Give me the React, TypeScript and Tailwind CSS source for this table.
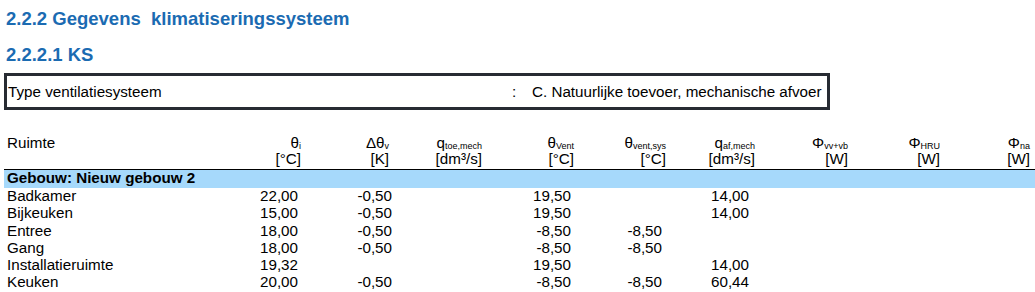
import React from "react";

type Row = { name: string; v: string[] };

const rows: Row[] = [
  { name: "Badkamer", v: ["22,00", "-0,50", "", "19,50", "", "14,00", "", "", ""] },
  { name: "Bijkeuken", v: ["15,00", "-0,50", "", "19,50", "", "14,00", "", "", ""] },
  { name: "Entree", v: ["18,00", "-0,50", "", "-8,50", "-8,50", "", "", "", ""] },
  { name: "Gang", v: ["18,00", "-0,50", "", "-8,50", "-8,50", "", "", "", ""] },
  { name: "Installatieruimte", v: ["19,32", "", "", "19,50", "", "14,00", "", "", ""] },
  { name: "Keuken", v: ["20,00", "-0,50", "", "-8,50", "-8,50", "60,44", "", "", ""] },
];

const dataPr = [
  "pr-[4px]",
  "pr-[1px]",
  "pr-[1px]",
  "pr-[4px]",
  "pr-[5px]",
  "pr-[7px]",
  "pr-[1px]",
  "pr-[1px]",
  "pr-[1px]",
];

const hdrPr = [
  "pr-[1px]",
  "pr-[4px]",
  "pr-[1px]",
  "pr-[1px]",
  "pr-[1px]",
  "pr-[1px]",
  "pr-[1px]",
  "pr-[1px]",
  "pr-[1px]",
];

const Sym = ({ main, sub }: { main: string; sub: string }) => (
  <span className="whitespace-nowrap">
    {main}
    <span className="relative top-[1px] text-[9px]">{sub}</span>
  </span>
);

const headers: { sym: React.ReactNode; unit: string }[] = [
  { sym: <Sym main="θ" sub="i" />, unit: "[°C]" },
  { sym: <Sym main="Δθ" sub="v" />, unit: "[K]" },
  { sym: <Sym main="q" sub="toe,mech" />, unit: "[dm³/s]" },
  { sym: <Sym main="θ" sub="Vent" />, unit: "[°C]" },
  { sym: <Sym main="θ" sub="vent,sys" />, unit: "[°C]" },
  { sym: <Sym main="q" sub="af,mech" />, unit: "[dm³/s]" },
  { sym: <Sym main="Φ" sub="vv+vb" />, unit: "[W]" },
  { sym: <Sym main="Φ" sub="HRU" />, unit: "[W]" },
  { sym: <Sym main="Φ" sub="na" />, unit: "[W]" },
];

const gridCols =
  "grid grid-cols-[208px_90px_91px_90px_92px_92px_89px_93px_92px_90px]";

export default function App() {
  return (
    <div className="w-[1035px] h-[292px] overflow-hidden bg-white text-black font-['Liberation_Sans',Arial,sans-serif]">
      <div className="pl-[6px] pt-[7px] h-[31px] text-[18.5px] leading-[24px] font-bold text-[#1b6bb2] whitespace-pre">
        2.2.2 Gegevens  klimatiseringssysteem
      </div>
      <div className="pl-[6px] mt-[12px] h-[24px] text-[18.5px] leading-[24px] font-bold text-[#1b6bb2]">
        2.2.2.1 KS
      </div>
      <div className="ml-[4px] mt-[6px] w-[826px] h-[37px] border-[3px] border-[#272b33] flex items-center text-[15.2px] leading-[17px]">
        <span className="w-[505px] pl-[1px]">Type ventilatiesysteem</span>
        <span className="w-[20px]">:</span>
        <span>C. Natuurlijke toevoer, mechanische afvoer</span>
      </div>

      <div className="ml-[4px] mt-[24px] w-[1031px] text-[15.2px]">
        <div className={`${gridCols} pt-[2px] pb-[3px] border-b border-black leading-[14px]`}>
          <div className="pl-[3px]">Ruimte</div>
          {headers.map((h, i) => (
            <div key={i} className={`flex flex-col items-end ${hdrPr[i]}`}>
              <div className="whitespace-nowrap">{h.sym}</div>
              <div className="whitespace-nowrap">{h.unit}</div>
            </div>
          ))}
        </div>
        <div className="h-[18px] bg-[#a6d9fb] font-bold leading-[13px] pl-[3px] pt-[1px]">
          Gebouw: Nieuw gebouw 2
        </div>
        <div className="leading-[17.3px] -mt-[1px]">
          {rows.map((r) => (
            <div key={r.name} className={gridCols}>
              <div className="pl-[3px] whitespace-nowrap">{r.name}</div>
              {r.v.map((val, i) => (
                <div key={i} className={`text-right ${dataPr[i]}`}>
                  {val}
                </div>
              ))}
            </div>
          ))}
        </div>
      </div>
    </div>
  );
}
